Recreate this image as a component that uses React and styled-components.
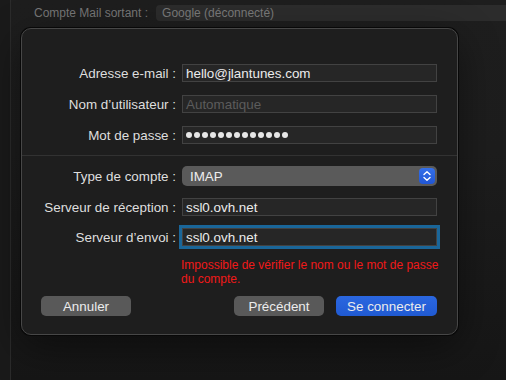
import React from 'react';
import styled, { createGlobalStyle } from 'styled-components';

const GlobalStyle = createGlobalStyle`
  body {
    margin: 0;
    background: #1b1b1b;
    font-family: "Liberation Sans", Arial, sans-serif;
    -webkit-font-smoothing: antialiased;
  }
`;

const Page = styled.div`
  display: flex;
  width: 506px;
  height: 380px;
  overflow: hidden;
  background: linear-gradient(#1e1e1e 0, #1d1d1d 40%, #161616 100%);
`;

const Sidebar = styled.div`
  width: 10px;
  flex-shrink: 0;
  background: #1a1a1a;
  border-right: 1px solid #2b2b2b;
`;

const Main = styled.div`
  flex: 1;
  display: flex;
  flex-direction: column;
  min-width: 0;
`;

const TopBar = styled.div`
  display: flex;
  align-items: center;
  gap: 8px;
  height: 28px;
  padding: 5px 0 7px 23px;
  box-sizing: border-box;
  font-size: 12px;
`;

const TopLabel = styled.span`
  color: #777;
  white-space: nowrap;
`;

const TopPopup = styled.div`
  flex: 1;
  height: 16px;
  line-height: 16px;
  padding-left: 6px;
  background: #2c2c2c;
  border-radius: 4px 0 0 4px;
  color: #7a7a7a;
  white-space: nowrap;
`;

const Sheet = styled.div`
  margin-left: 10px;
  width: 437px;
  height: 307px;
  box-sizing: border-box;
  display: flex;
  flex-direction: column;
  background: #1e1e1e;
  border: 1px solid #474747;
  border-radius: 10px;
  box-shadow: 0 0 0 1px #080808, 0 12px 40px rgba(0, 0, 0, 0.45);
`;

const FormGroup = styled.div`
  display: flex;
  flex-direction: column;
  gap: ${(p) => p.$gap}px;
  padding-top: ${(p) => p.$top}px;
`;

const Row = styled.div`
  display: grid;
  grid-template-columns: 154px 255px;
  column-gap: 6px;
  align-items: center;
`;

const Label = styled.label`
  text-align: right;
  font-size: 13.4px;
  color: #dedede;
  white-space: nowrap;
`;

const Field = styled.div`
  height: 18px;
  box-sizing: border-box;
  display: flex;
  align-items: center;
  padding-left: 3px;
  background: #262626;
  border: 1px solid #424242;
  font-size: 13.4px;
  color: ${(p) => (p.$placeholder ? '#5c5c5c' : '#ececec')};
  box-shadow: ${(p) => (p.$focused ? '0 0 0 3px #1a6699' : 'none')};
`;

const Dots = styled.div`
  display: flex;
  gap: 2px;
`;

const Dot = styled.span`
  width: 6px;
  height: 6px;
  border-radius: 50%;
  background: #e6e6e6;
`;

const Separator = styled.div`
  height: 1px;
  margin-top: 11px;
  background: #323232;
`;

const Popup = styled.div`
  height: 20px;
  box-sizing: border-box;
  display: flex;
  align-items: center;
  justify-content: space-between;
  padding: 0 2px 0 8px;
  background: #5a5a5a;
  border-radius: 5px;
  font-size: 13.4px;
  color: #ededed;
`;

const Stepper = styled.span`
  width: 16px;
  height: 16px;
  border-radius: 4px;
  background: linear-gradient(#3470ea, #2156d4);
  display: flex;
  align-items: center;
  justify-content: center;
`;

const ErrorText = styled.p`
  margin: 12px 0 0 159px;
  width: 260px;
  font-size: 12px;
  line-height: 14px;
  color: #f01919;
`;

const ButtonBar = styled.div`
  display: flex;
  align-items: center;
  gap: 12px;
  margin-top: 10px;
  padding: 0 20px 0 19px;
`;

const Spacer = styled.div`
  flex: 1;
`;

const Button = styled.button`
  width: ${(p) => p.$width}px;
  height: 20px;
  padding: 0;
  border: none;
  border-radius: 5px;
  font-family: inherit;
  font-size: 13.4px;
  color: #ececec;
  background: ${(p) => (p.$primary ? 'linear-gradient(#2b67e0, #205ad2)' : '#595959')};
`;

const App = () => {
  return (
    <>
      <GlobalStyle />
      <Page>
        <Sidebar />
        <Main>
          <TopBar>
            <TopLabel>Compte Mail sortant :</TopLabel>
            <TopPopup>Google (déconnecté)</TopPopup>
          </TopBar>
          <Sheet>
            <FormGroup $gap={13} $top={35}>
              <Row>
                <Label>Adresse e-mail :</Label>
                <Field>hello@jlantunes.com</Field>
              </Row>
              <Row>
                <Label>Nom d’utilisateur :</Label>
                <Field $placeholder>Automatique</Field>
              </Row>
              <Row>
                <Label>Mot de passe :</Label>
                <Field>
                  <Dots>
                    {Array.from({ length: 13 }).map((_, i) => (
                      <Dot key={i} />
                    ))}
                  </Dots>
                </Field>
              </Row>
            </FormGroup>
            <Separator />
            <FormGroup $gap={12} $top={10}>
              <Row>
                <Label>Type de compte :</Label>
                <Popup>
                  IMAP
                  <Stepper>
                    <svg width="10" height="12" viewBox="0 0 10 12" fill="none">
                      <path d="M2 4.5 L5 1.8 L8 4.5" stroke="#fff" strokeWidth="1.4" strokeLinecap="round" strokeLinejoin="round" />
                      <path d="M2 7.5 L5 10.2 L8 7.5" stroke="#fff" strokeWidth="1.4" strokeLinecap="round" strokeLinejoin="round" />
                    </svg>
                  </Stepper>
                </Popup>
              </Row>
              <Row>
                <Label>Serveur de réception :</Label>
                <Field>ssl0.ovh.net</Field>
              </Row>
              <Row>
                <Label>Serveur d’envoi :</Label>
                <Field $focused>ssl0.ovh.net</Field>
              </Row>
            </FormGroup>
            <ErrorText>
              Impossible de vérifier le nom ou le mot de passe du compte.
            </ErrorText>
            <ButtonBar>
              <Button $width={90}>Annuler</Button>
              <Spacer />
              <Button $width={90}>Précédent</Button>
              <Button $width={101} $primary>Se connecter</Button>
            </ButtonBar>
          </Sheet>
        </Main>
      </Page>
    </>
  );
};

export default App;
